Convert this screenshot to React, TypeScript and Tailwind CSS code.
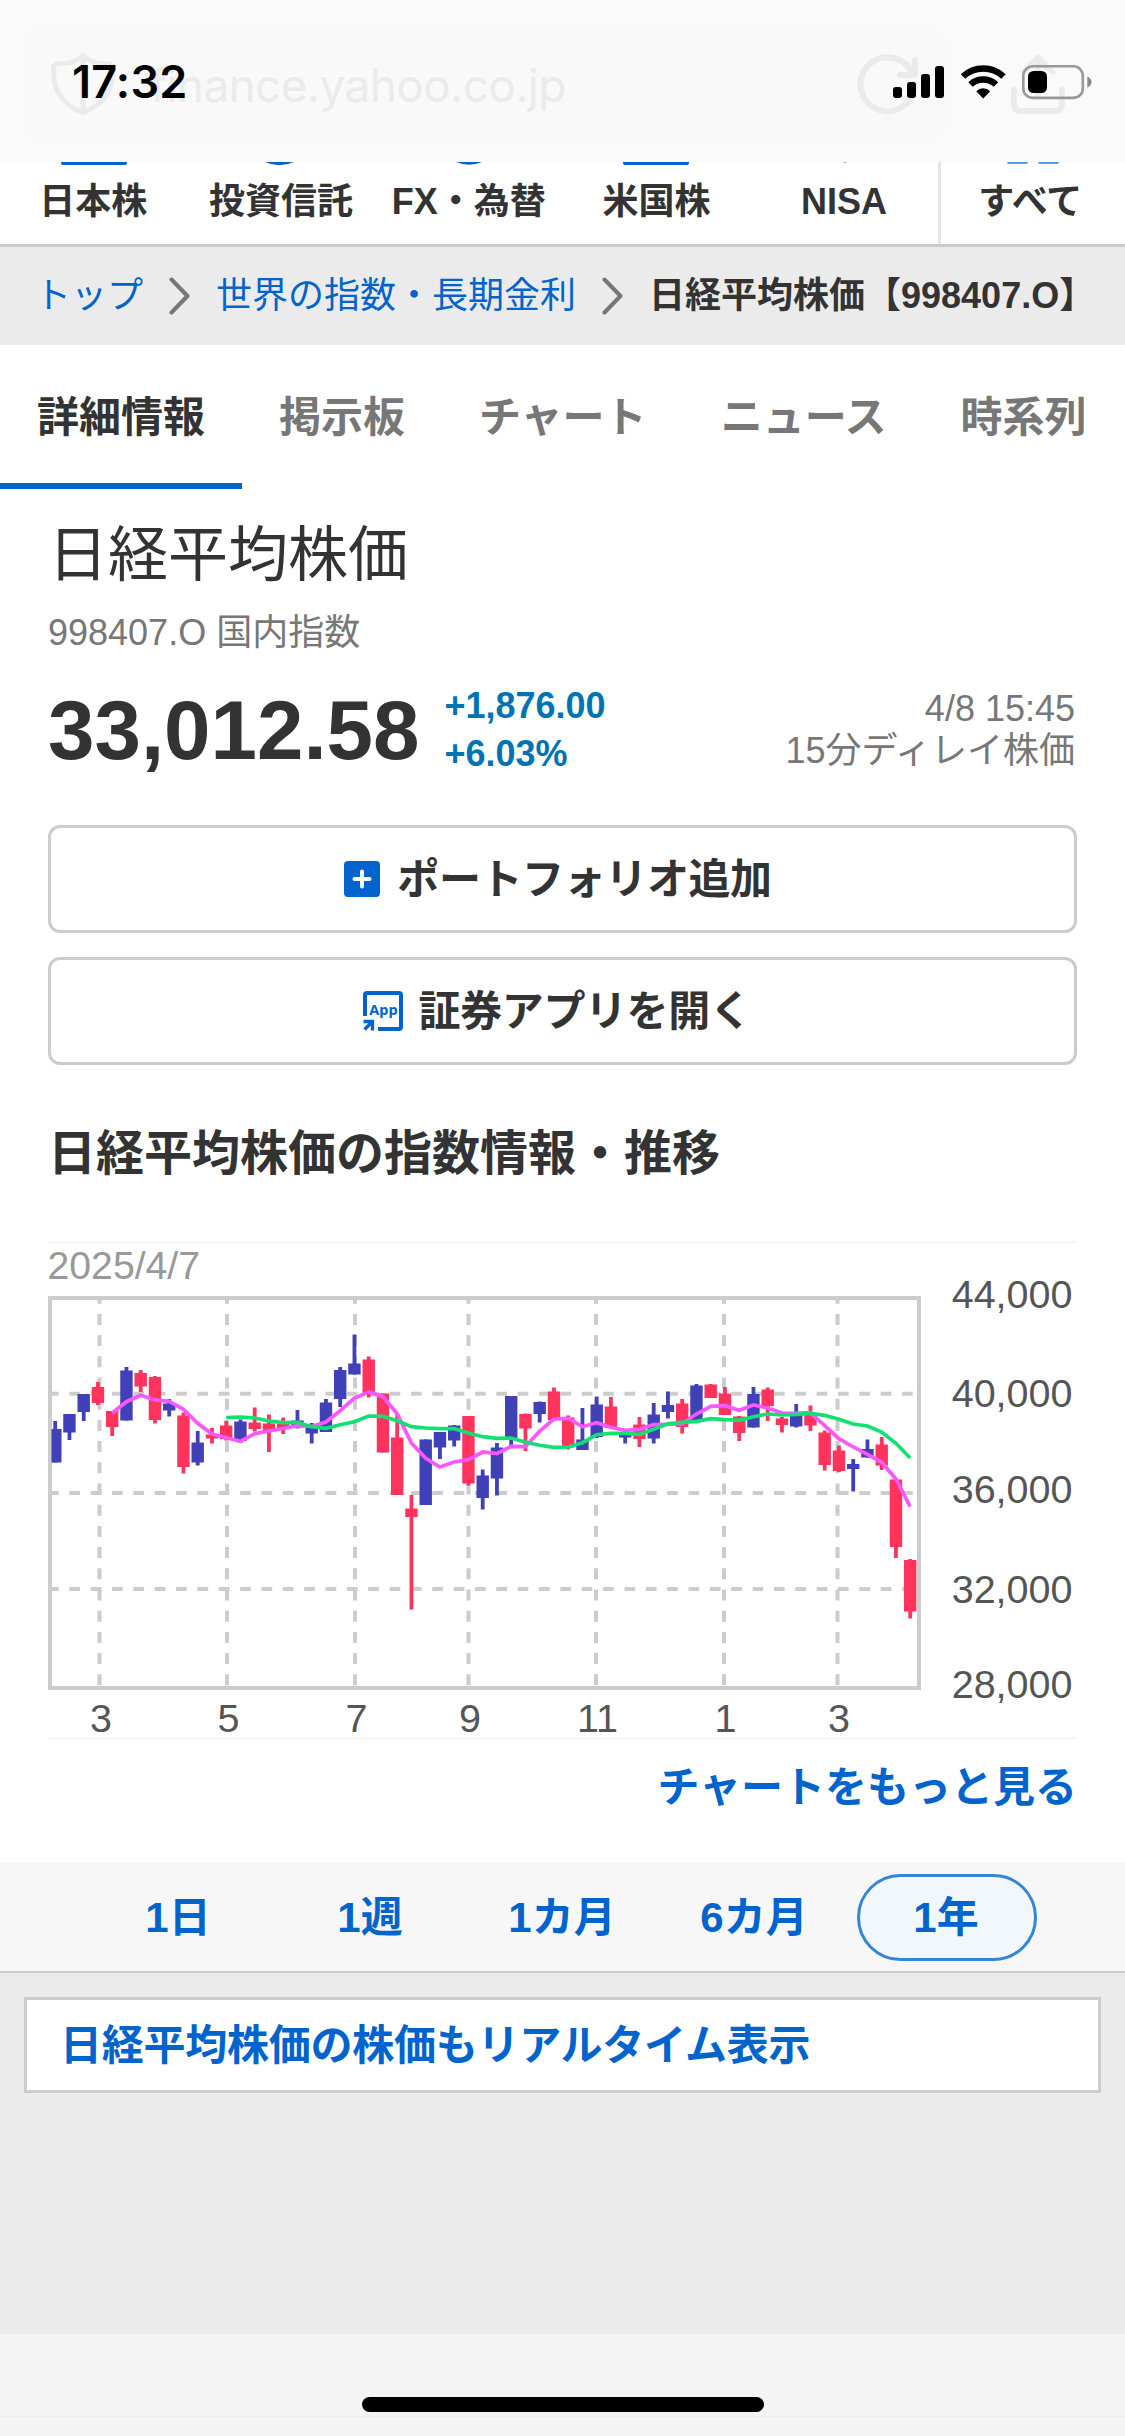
import React, { useState } from 'react'
import { clsx } from 'clsx'

type Candle = [high: number, top: number, bottom: number, low: number, up: 0 | 1]

const categories = ['日本株', '投資信託', 'FX・為替', '米国株', 'NISA']
const tabs = ['詳細情報', '掲示板', 'チャート', 'ニュース', '時系列']
const ranges = ['1日', '1週', '1カ月', '6カ月', '1年']

// Weekly candles, in chart units
const candles: Candle[] = [
  [191, 199, 232.5, 232.5, 1],
  [184, 184, 202.5, 210, 1],
  [164, 164, 182, 191, 1],
  [152, 157, 173, 175, 0],
  [181, 181, 197, 206, 0],
  [137, 140.5, 190.5, 190.5, 1],
  [140, 143, 156.5, 162, 0],
  [146, 147, 190, 193.5, 0],
  [169, 173.5, 180.5, 186.5, 1],
  [182.5, 185.5, 237, 243.5, 0],
  [201, 212.5, 232.5, 235.5, 1],
  [198, 204.5, 208.5, 213.5, 0],
  [191, 195.5, 209, 210.5, 0],
  [189.5, 191.5, 211, 212.5, 1],
  [177.5, 192.5, 199, 201.5, 0],
  [184.5, 193.5, 201, 222, 0],
  [187.5, 194, 198, 204, 0],
  [180, 190.5, 197.5, 198.5, 1],
  [193, 196.5, 203.5, 213.5, 1],
  [169, 172.5, 202, 202, 1],
  [137, 140, 169, 177, 1],
  [104.5, 133.5, 144.5, 144.5, 1],
  [126.5, 129.5, 163, 167.5, 0],
  [163.5, 163.5, 222.5, 222.5, 0],
  [183, 207.5, 265, 265, 0],
  [265, 278.5, 287, 379.5, 0],
  [209.5, 209.5, 275, 275, 1],
  [202, 202, 217.5, 229, 1],
  [195, 195.5, 210.5, 216.5, 1],
  [186, 186, 253.5, 255.5, 0],
  [239.5, 245.5, 268, 279.5, 1],
  [213, 217.5, 248.5, 265.5, 1],
  [166, 166, 208.5, 216.5, 1],
  [183.5, 184, 198.5, 221, 0],
  [171.5, 172, 184, 192.5, 1],
  [157.5, 161.5, 190, 191, 0],
  [185.5, 187.5, 217.5, 219.5, 0],
  [178, 209.5, 220, 220, 1],
  [166.5, 174.5, 207, 208, 1],
  [167, 176.5, 198, 198, 0],
  [201, 203, 207.5, 213.5, 1],
  [187, 194.5, 209, 217, 0],
  [173, 184.5, 208.5, 213.5, 1],
  [161.5, 175, 182, 188.5, 1],
  [169, 173.5, 197, 203.5, 0],
  [154, 155.5, 190, 190, 1],
  [154, 154.5, 168, 168, 0],
  [157, 163.5, 185, 185, 0],
  [186, 186.5, 203, 211, 0],
  [157, 164, 197.5, 197.5, 1],
  [157.5, 159.5, 176, 191, 0],
  [187, 188.5, 195, 202.5, 0],
  [174, 184, 196.5, 197.5, 1],
  [175.5, 184, 195.5, 201, 0],
  [200.5, 202.5, 235, 240.5, 0],
  [215.5, 220.5, 241, 242, 0],
  [229, 234, 239, 261.5, 1],
  [209.5, 219, 227.5, 227.5, 1],
  [207, 214.5, 235.5, 240, 0],
  [248.5, 249.5, 317, 328, 0],
  [329, 330, 381.5, 388.5, 0],
]

// Moving averages: short starts at week 4, long at week 12
const shortAverage = [
  183, 171.7, 165.3, 170, 171.3, 179.3, 193.3, 204, 207.7, 211.3, 203.7, 201, 198.5, 195.7, 196.5, 192,
  180.7, 168, 162, 166.7, 183.7, 213, 228.3, 237, 232, 229.7, 222, 223.7, 216.3, 216.7, 201, 189, 188.3,
  196.7, 192.7, 197.3, 200.3, 199.3, 194.7, 194.3, 193.7, 184, 176.3, 175.7, 180.3, 175, 178, 183, 183.3,
  182.7, 195.7, 208.7, 217, 224.3, 232.3, 249, 276.7,
]
const longAverage = [
  187.5, 187, 188, 191, 192.7, 192.3, 196.7, 198.3, 194.7, 191.7, 186, 186.3, 190.7, 196.7, 198, 198.7,
  198.7, 203, 206.7, 208.3, 208, 212.3, 215.3, 217.3, 217, 212.7, 204.7, 203.3, 203.3, 204.3, 199.3, 193.7,
  192.3, 191.3, 188.7, 189.7, 190.3, 186.7, 184, 185, 184.3, 183.3, 185.3, 189.3, 194, 196, 202, 213.3, 228,
]

const months = [
  { x: 51.5, label: '3' },
  { x: 179, label: '5' },
  { x: 307, label: '7' },
  { x: 420.5, label: '9' },
  { x: 548, label: '11' },
  { x: 676, label: '1' },
  { x: 789.5, label: '3' },
]
const prices = [
  { y: 78, label: '44,000' },
  { y: 177, label: '40,000' },
  { y: 273, label: '36,000' },
  { y: 372.5, label: '32,000' },
  { y: 468, label: '28,000' },
]

const weekX = (week: number) => 7.2 + week * 14.25

const toPoints = (values: number[], start: number) =>
  values.map((y, i) => `${weekX(start + i)},${y}`).join(' ')

const PriceChart: React.FC = () => (
  <svg className="mt-[40px] block h-[512px] w-full" viewBox="0 0 1029 512" fill="none">
    <path d="M0 12.5H1029M0 508.5H1029" stroke="#f3f3f3" strokeWidth="1.5" />
    <g fontFamily="'Liberation Sans', sans-serif" fontSize="39.5">
      <text x="-0.5" y="48.5" fill="#999" fontSize="39.2">2025/4/7</text>
      {prices.map((p) => (
        <text key={p.label} x="1024.5" y={p.y} textAnchor="end" fill="#555">{p.label}</text>
      ))}
      {months.map((m) => (
        <text key={m.x} x={m.x + 1.5} y="502" textAnchor="middle" fill="#555">{m.label}</text>
      ))}
    </g>
    <g stroke="#ccc" strokeWidth="4">
      {months.map((m) => (
        <path key={m.x} d={`M${m.x} 68V458`} strokeDasharray="11 10.2" strokeDashoffset="5.3" />
      ))}
      {[163.7, 263, 359].map((y) => (
        <path key={y} d={`M0 ${y}H871`} strokeDasharray="10.7 10.65" />
      ))}
      <rect x="2" y="68" width="869" height="390" />
    </g>
    {candles.map(([high, top, bottom, low, up], i) => (
      <g key={i} fill={up ? '#4040b8' : '#ff335c'}>
        <rect x={weekX(i) - 1.9} y={high} width="3.8" height={low - high} />
        <rect x={Math.max(weekX(i) - 6.2, 3.5)} y={top} width={i === 0 ? 10 : 12.4} height={bottom - top} />
      </g>
    ))}
    <polyline points={toPoints(shortAverage, 4)} stroke="#f858ff" strokeWidth="3.7" />
    <polyline points={toPoints(longAverage, 12)} stroke="#12e070" strokeWidth="3.7" />
  </svg>
)

const StatusBar: React.FC = () => (
  <header className="relative h-[162px] bg-[#fafafa] font-['Inter',sans-serif]">
    {/* Faded address bar */}
    <div className="absolute left-[23px] top-[24px] h-[120px] w-[928px] rounded-[26px] bg-[#f9f9f9] text-[#ebebeb]">
      <svg className="absolute left-[27px] top-[27px] h-[66px] w-[66px]" viewBox="0 0 66 66" fill="none" stroke="currentColor" strokeWidth="5" strokeLinejoin="round">
        <path d="M33 4C28 10 19 13 9 12.500C6 12.500 3.500 14 3.500 18C3 40 12 53 33 62C54 53 63 40 62.500 18C62.500 14 60 12.500 57 12.500C47 13 38 10 33 4ZM33 4V62" />
      </svg>
      <span className="absolute left-[127px] top-[31px] whitespace-nowrap text-[46px] leading-[60px] tracking-[-0.65px]">finance.yahoo.co.jp</span>
    </div>
    <svg className="absolute left-[850px] top-[50px] h-[70px] w-[230px] text-[#ebebeb]" viewBox="850 50 230 70" fill="none" stroke="currentColor" strokeWidth="6" strokeLinecap="round" strokeLinejoin="round">
      <path d="M911 71A27 27 0 1 0 914.500 84M915 60V75H900" />
      <path d="M1014 90V104Q1014 111 1021 111H1055Q1062 111 1062 104V90M1038 96V60" />
      <path d="M1023 72L1038 57L1053 72L1038 62Z" fill="currentColor" strokeWidth="5" />
    </svg>

    <div className="relative flex items-start justify-between pl-[72px] pr-[33px] pt-[54px]">
      <time className="text-[45px] font-semibold leading-[56px] tracking-[0.2px] text-black">17:32</time>
      <svg className="mt-[10px] h-[36px] w-[200px]" viewBox="892 64 200 36">
        <rect x="893" y="87" width="9" height="11" rx="3" />
        <rect x="907" y="82" width="9" height="16" rx="3" />
        <rect x="921" y="74" width="9" height="24" rx="3" />
        <rect x="935" y="66" width="9" height="32" rx="3" />
        <g fill="none" stroke="#000" strokeWidth="6.500">
          <path d="M963 76.500A29.500 29.500 0 0 1 1003.500 76.500" />
          <path d="M970.500 84.500A18.500 18.500 0 0 1 996 84.500" />
        </g>
        <path d="M983.200 98.500L976.200 91.200A10 10 0 0 1 990.200 91.200Z" />
        <rect x="1023.300" y="66.300" width="59.500" height="31.600" rx="9.500" fill="none" stroke="#999" strokeWidth="2.600" />
        <rect x="1028" y="71" width="19" height="22" rx="5.500" />
        <path d="M1087.300 76.500Q1091.500 78.500 1091.500 82Q1091.500 85.500 1087.300 87.500Z" fill="#888" />
      </svg>
    </div>
  </header>
)

const CategoryNav: React.FC = () => (
  <nav className="relative flex h-[85px] border-b-[3px] border-[#ccc] bg-white text-[36px] font-bold leading-[44px]">
    {categories.map((name) => (
      <a key={name} className="w-[187.7px] pr-[1px] pt-[18px] text-center">{name}</a>
    ))}
    <a className="flex-1 border-l-[3px] border-[#e5e5e5] pr-[6px] pt-[18px] text-center">すべて</a>
    {/* Bottom edges of the icons scrolled under the address bar */}
    <svg className="absolute left-0 top-0 h-[4px] w-full" viewBox="0 0 1125 4" fill="#0064cc">
      <path d="M61 0H127V1Q127 3 125 3H63Q61 3 61 1Z" />
      <path d="M265 0H294Q279 6.500 265 0ZM456 0H482Q469 5.500 456 0Z" />
      <path d="M623 0H689V1Q689 3 687 3H625Q623 3 623 1Z" />
      <path d="M843 0H847L845 1ZM1007 0H1028Q1028 2 1026 2H1009Q1007 2 1007 0ZM1038 0H1059Q1059 2 1057 2H1040Q1038 2 1038 0Z" fill="#5c9fde" />
    </svg>
  </nav>
)

const Chevron: React.FC = () => (
  <svg className="mx-[26px] h-[38px] w-[21px] shrink-0" viewBox="0 0 21 38" fill="none" stroke="#777" strokeWidth="4" strokeLinecap="round" strokeLinejoin="round">
    <path d="M2.500 2.500L18.500 19L2.500 35.500" />
  </svg>
)

const Breadcrumbs: React.FC = () => (
  <div className="flex h-[98px] items-center whitespace-nowrap bg-[#ebebeb] pl-[35px] text-[36px] leading-[44px]">
    <a className="text-[#0064cc]">トップ</a>
    <Chevron />
    <a className="text-[#0064cc]">世界の指数・長期金利</a>
    <Chevron />
    <span className="font-bold">日経平均株価【998407.O】</span>
  </div>
)

const App: React.FC = () => {
  const [tab, setTab] = useState('詳細情報')
  const [range, setRange] = useState('1年')

  return (
    <div lang="ja" className="flex h-[2436px] w-[1125px] flex-col overflow-hidden bg-white font-['Liberation_Sans','Noto_Sans_CJK_JP',sans-serif] text-[#333]">
      <StatusBar />
      <CategoryNav />
      <Breadcrumbs />

      <div className="flex h-[144px] text-[42px] font-bold leading-[50px]">
        {tabs.map((name) => (
          <button
            key={name}
            onClick={() => setTab(name)}
            className={clsx(
              'shrink-0 whitespace-nowrap border-b-[6px] px-[37px] pt-2 last:pr-9',
              tab === name ? 'border-[#0064cc]' : 'border-transparent text-[#777]'
            )}
          >
            {name}
          </button>
        ))}
      </div>

      <main className="px-12">
        <h1 className="mt-[31px] text-[60px] leading-[72px]">日経平均株価</h1>
        <p className="mt-[17px] text-[36px] leading-[48px] text-[#777]">998407.O 国内指数</p>

        {/* Quote */}
        <div className="mt-[25px] flex h-24 items-center">
          <span className="text-[83.5px] font-bold leading-[96px]">33,012.58</span>
          <div className="ml-[25px] text-[36px] font-bold leading-[48px] text-[#0074b2]">
            <p>+1,876.00</p>
            <p>+6.03%</p>
          </div>
          <div className="ml-auto pr-[2px] text-right text-[36px] leading-[42px] text-[#777]">
            <p>4/8 15:45</p>
            <p>15分ディレイ株価</p>
          </div>
        </div>

        <div className="mt-[47px] flex flex-col gap-6 text-[42px] font-bold tracking-[-0.4px]">
          <button className="flex h-[108px] items-center justify-center rounded-xl border-[3px] border-[#ccc] pr-[9px]">
            <svg className="mr-[17px] h-9 w-9" viewBox="0 0 36 36">
              <rect width="36" height="36" rx="4" fill="#0064cc" />
              <path d="M18 10.500V25.500M10.500 18H25.500" stroke="#fff" strokeWidth="4" strokeLinecap="round" />
            </svg>
            ポートフォリオ追加
          </button>
          <button className="flex h-[108px] items-center justify-center rounded-xl border-[3px] border-[#ccc] pr-[11px]">
            <svg className="mr-[16px] h-10 w-10" viewBox="0 0 40 40" fill="none" stroke="#0064cc">
              <path d="M2 25V4Q2 2 4 2H36Q38 2 38 4V36Q38 38 36 38H15" strokeWidth="4" />
              <path d="M1.500 38.500L8.500 31.500M0.500 30.500H9.500V39.500" strokeWidth="3.300" />
              <text x="20.500" y="24" textAnchor="middle" fontFamily="'Noto Sans', sans-serif" fontSize="14.500" fontWeight="700" letterSpacing="0" fill="#0064cc" stroke="none">App</text>
            </svg>
            証券アプリを開く
          </button>
        </div>

        <h2 className="mt-[53px] text-[48px] font-bold leading-[72px]">日経平均株価の指数情報・推移</h2>
        <PriceChart />
        <div className="mt-[16px] text-right text-[42px] font-bold leading-[60px] text-[#0064cc]">
          <a>チャートをもっと見る</a>
        </div>
      </main>

      <div className="mt-[44px] flex h-[111px] items-center gap-3 border-b-2 border-[#ccc] bg-[#f7f7f7] pl-[89px] pt-[2px] text-[42px] font-bold text-[#0064cc]">
        {ranges.map((name) => (
          <button
            key={name}
            onClick={() => setRange(name)}
            className={clsx(
              'h-[87px] w-[180px] rounded-full border-[3px] pr-[2px] leading-[60px]',
              range === name ? 'border-[#3385d6] bg-[#f2f7fc]' : 'border-transparent'
            )}
          >
            {name}
          </button>
        ))}
      </div>

      <div className="h-[361px] bg-[#ebebeb] px-6 pt-6">
        <a className="flex h-24 items-center border-[3px] border-[#ccc] bg-white pl-[33px] text-[42px] font-bold tracking-[-0.25px] text-[#0064cc]">
          日経平均株価の株価もリアルタイム表示
        </a>
      </div>

      <footer className="flex h-[102px] flex-col items-center bg-[#f4f4f4] pt-[63px]">
        <div className="h-[15px] w-[402px] rounded-full bg-black" />
        <div className="mt-[4px] h-px w-full bg-[#ededed]" />
      </footer>
    </div>
  )
}

export default App
